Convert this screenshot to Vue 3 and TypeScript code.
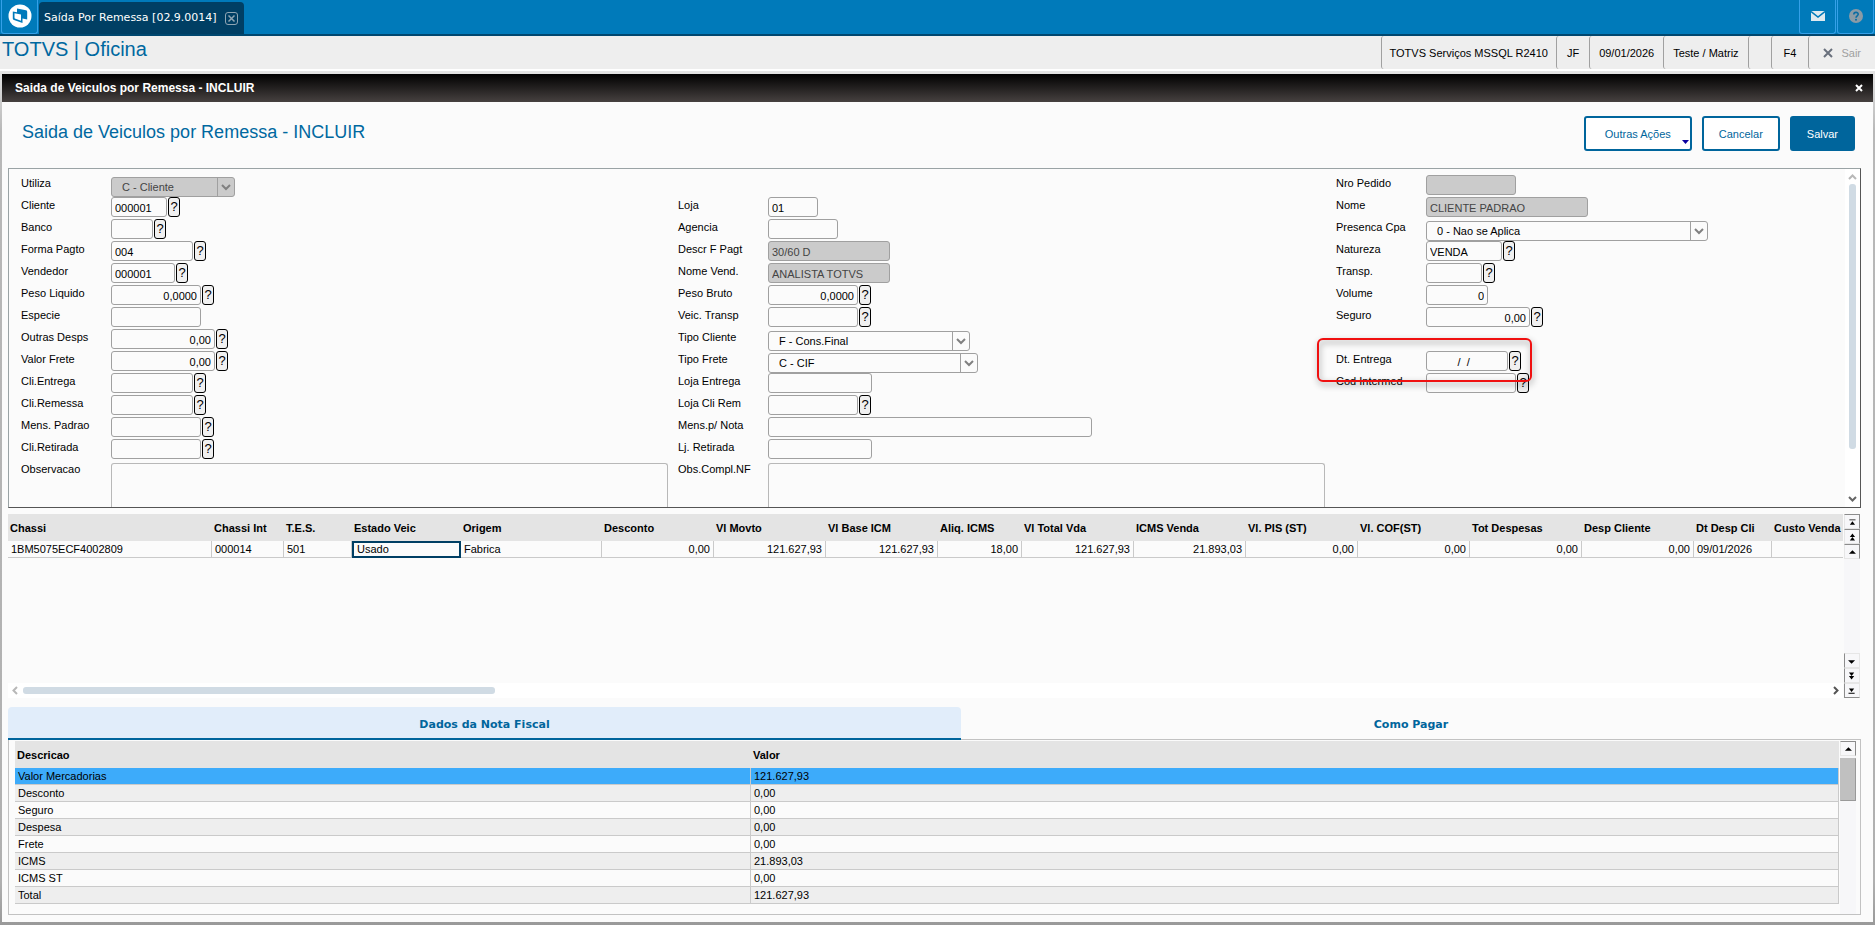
<script setup lang="ts">
import { reactive, ref } from 'vue'

type Kind = 'text' | 'select' | 'area' | 'blank'

interface Field {
  id: string
  label: string
  kind: Kind
  width: number
  value: string
  lookup?: boolean
  numeric?: boolean
  disabled?: boolean
  marked?: boolean
}

interface GridColumn {
  title: string
  width: number
  value: string
  numeric?: boolean
  active?: boolean
}

function text(id: string, label: string, width: number, value = '', extra: Partial<Field> = {}): Field {
  return { id, label, kind: 'text', width, value, ...extra }
}

const lookup = { lookup: true }
const amount = { lookup: true, numeric: true }

const columns = reactive<Field[][]>([
  [
    { id: 'utiliza', label: 'Utiliza', kind: 'select', width: 124, value: 'C - Cliente', disabled: true },
    text('cliente', 'Cliente', 56, '000001', lookup),
    text('banco', 'Banco', 42, '', lookup),
    text('forma-pagto', 'Forma Pagto', 82, '004', lookup),
    text('vendedor', 'Vendedor', 64, '000001', lookup),
    text('peso-liquido', 'Peso Liquido', 90, '0,0000', amount),
    text('especie', 'Especie', 90),
    text('outras-desps', 'Outras Desps', 104, '0,00', amount),
    text('valor-frete', 'Valor Frete', 104, '0,00', amount),
    text('cli-entrega', 'Cli.Entrega', 82, '', lookup),
    text('cli-remessa', 'Cli.Remessa', 82, '', lookup),
    text('mens-padrao', 'Mens. Padrao', 90, '', lookup),
    text('cli-retirada', 'Cli.Retirada', 90, '', lookup),
    { id: 'observacao', label: 'Observacao', kind: 'area', width: 557, value: '' },
  ],
  [
    { id: 'vazio-1', label: '', kind: 'blank', width: 0, value: '' },
    text('loja', 'Loja', 50, '01'),
    text('agencia', 'Agencia', 70),
    text('descr-pagt', 'Descr F Pagt', 122, '30/60 D', { disabled: true }),
    text('nome-vend', 'Nome Vend.', 122, 'ANALISTA TOTVS', { disabled: true }),
    text('peso-bruto', 'Peso Bruto', 90, '0,0000', amount),
    text('veic-transp', 'Veic. Transp', 90, '', lookup),
    { id: 'tipo-cliente', label: 'Tipo Cliente', kind: 'select', width: 202, value: 'F - Cons.Final' },
    { id: 'tipo-frete', label: 'Tipo Frete', kind: 'select', width: 210, value: 'C - CIF' },
    text('loja-entrega', 'Loja Entrega', 104),
    text('loja-cli-rem', 'Loja Cli Rem', 90, '', lookup),
    text('mens-nota', 'Mens.p/ Nota', 324),
    text('lj-retirada', 'Lj. Retirada', 104),
    { id: 'obs-compl', label: 'Obs.Compl.NF', kind: 'area', width: 557, value: '' },
  ],
  [
    text('nro-pedido', 'Nro Pedido', 90, '', { disabled: true }),
    text('nome', 'Nome', 162, 'CLIENTE PADRAO', { disabled: true }),
    { id: 'presenca', label: 'Presenca Cpa', kind: 'select', width: 282, value: '0 - Nao se Aplica' },
    text('natureza', 'Natureza', 76, 'VENDA', lookup),
    text('transp', 'Transp.', 56, '', lookup),
    text('volume', 'Volume', 62, '0', { numeric: true }),
    text('seguro', 'Seguro', 104, '0,00', amount),
    { id: 'vazio-2', label: '', kind: 'blank', width: 0, value: '' },
    text('dt-entrega', 'Dt. Entrega', 82, '         /  /', { lookup: true, marked: true }),
    text('cod-intermed', 'Cod Intermed', 90, '', lookup),
  ],
])

const grid: GridColumn[] = [
  { title: 'Chassi', width: 204, value: '1BM5075ECF4002809' },
  { title: 'Chassi Int', width: 72, value: '000014' },
  { title: 'T.E.S.', width: 68, value: '501' },
  { title: 'Estado Veic', width: 109, value: 'Usado', active: true },
  { title: 'Origem', width: 141, value: 'Fabrica' },
  { title: 'Desconto', width: 112, value: '0,00', numeric: true },
  { title: 'Vl Movto', width: 112, value: '121.627,93', numeric: true },
  { title: 'Vl Base ICM', width: 112, value: '121.627,93', numeric: true },
  { title: 'Aliq. ICMS', width: 84, value: '18,00', numeric: true },
  { title: 'Vl Total Vda', width: 112, value: '121.627,93', numeric: true },
  { title: 'ICMS Venda', width: 112, value: '21.893,03', numeric: true },
  { title: 'Vl. PIS (ST)', width: 112, value: '0,00', numeric: true },
  { title: 'Vl. COF(ST)', width: 112, value: '0,00', numeric: true },
  { title: 'Tot Despesas', width: 112, value: '0,00', numeric: true },
  { title: 'Desp Cliente', width: 112, value: '0,00', numeric: true },
  { title: 'Dt Desp Cli', width: 78, value: '09/01/2026' },
  { title: 'Custo Venda', width: 0, value: '' },
]

const totals: [string, string][] = [
  ['Valor Mercadorias', '121.627,93'],
  ['Desconto', '0,00'],
  ['Seguro', '0,00'],
  ['Despesa', '0,00'],
  ['Frete', '0,00'],
  ['ICMS', '21.893,03'],
  ['ICMS ST', '0,00'],
  ['Total', '121.627,93'],
]

const steppers = {
  top: [
    { name: 'Primeira linha', d: 'M5 4h7v1h-7zM8.500 6l3 4h-6z' },
    { name: 'Página anterior', d: 'M8.500 3l3 4h-6zM8.500 7l3 4h-6z' },
    { name: 'Linha anterior', d: 'M8.500 5l4 4h-8z' },
  ],
  bottom: [
    { name: 'Próxima linha', d: 'M7.500 10l-4-4h8z' },
    { name: 'Próxima página', d: 'M7.500 7l-3-4h6zM7.500 11l-3-4h6z' },
    { name: 'Última linha', d: 'M7.500 8l-3-4h6zM4 9h7v1h-7z' },
  ],
}

const session = ['TOTVS Serviços MSSQL R2410', 'JF', '09/01/2026', 'Teste / Matriz', '', 'F4']
const tabs = ['Dados da Nota Fiscal', 'Como Pagar']
const activeTab = ref(0)
const selected = ref(0)
</script>

<template>
  <div class="page">
    <header class="topbar">
      <button class="home" type="button" aria-label="Início">
        <svg width="24" height="24" viewBox="0 0 24 24">
          <circle cx="12" cy="12" r="11.500" fill="#fff" />
          <path d="M9 4.500 18 6.200a1.500 1.500 0 0 1 1.200 1.500V15.500l-4.700-1V19L6 16a1.500 1.500 0 0 1-1.200-1.500V7.500L9 8.200Z" fill="#007aba" />
          <path d="M6.500 9.200 13 10.500v6.300L7.500 14.800a1.500 1.500 0 0 1-1-1.400Z" fill="#fff" />
        </svg>
      </button>
      <div class="apptab">
        <span>Saída Por Remessa [02.9.0014]</span>
        <button class="tabclose" type="button" aria-label="Fechar aba">
          <svg width="13" height="13" viewBox="0 0 13 13" fill="none" stroke="#8fa5b3">
            <rect x=".5" y=".5" width="12" height="12" rx="2.500" />
            <path d="M3.500 3.500l6 6M9.500 3.500l-6 6" stroke-width="1.500" />
          </svg>
        </button>
      </div>
      <div class="spacer"></div>
      <button class="topicon" type="button" aria-label="Mensagens">
        <svg width="14" height="10" viewBox="0 0 14 10">
          <path d="M0 0h14v10H0z" fill="#e0e9ef" />
          <path d="M0 .5 7 6 14 .5" fill="none" stroke="#007aba" stroke-width="1.500" />
        </svg>
      </button>
      <button class="topicon" type="button" aria-label="Ajuda">
        <svg width="14" height="14" viewBox="0 0 14 14">
          <circle cx="7" cy="7" r="7" fill="#8b9ba6" />
          <path d="M4.800 5.500C4.800 2.600 9.300 2.700 9.200 5.300 9.100 6.800 7 6.800 7 8.700" fill="none" stroke="#0a6ca3" stroke-width="1.600" />
          <circle cx="7" cy="10.800" r="1" fill="#0a6ca3" />
        </svg>
      </button>
    </header>

    <div class="session">
      <h1>TOTVS | Oficina</h1>
      <div v-for="(item, i) in session" :key="i" class="cell">{{ item }}</div>
      <button class="cell leave" type="button">
        <svg width="10" height="10" viewBox="0 0 10 10" stroke="#69707c" stroke-width="2"><path d="M1 1l8 8M9 1l-8 8" /></svg>
        Sair
      </button>
    </div>

    <div class="frame">
      <main class="window">
        <div class="titlebar">
          <span>Saida de Veiculos por Remessa - INCLUIR</span>
          <button type="button" aria-label="Fechar">
            <svg width="8" height="8" viewBox="0 0 8 8" stroke="#fff" stroke-width="2"><path d="M1 1l6 6M7 1l-6 6" /></svg>
          </button>
        </div>

        <div class="toolbar">
          <h2>Saida de Veiculos por Remessa - INCLUIR</h2>
          <button class="action more" type="button">
            Outras Ações
            <svg class="caret" width="7" height="4" viewBox="0 0 7 4"><path d="M0 0h7L3.500 4z" fill="#0a00a0" /></svg>
          </button>
          <button class="action" type="button">Cancelar</button>
          <button class="action primary" type="button">Salvar</button>
        </div>

        <form class="panel" @submit.prevent>
          <div class="columns">
            <div v-for="(column, c) in columns" :key="c" class="column">
              <div v-for="field in column" :key="field.id" class="field" :class="{ marked: field.marked }">
                <template v-if="field.kind !== 'blank'">
                  <label :for="field.id">{{ field.label }}</label>
                  <div v-if="field.kind === 'select'" class="drop" :style="{ width: field.width + 'px' }">
                    <select :id="field.id" v-model="field.value" :disabled="field.disabled">
                      <option>{{ field.value }}</option>
                    </select>
                    <svg width="18" height="18" viewBox="0 0 18 18" fill="none">
                      <path d="M.5 0v18" stroke="#a0a0a0" />
                      <path d="M5 7l4 4 4-4" stroke="#808080" stroke-width="2" />
                    </svg>
                  </div>
                  <textarea v-else-if="field.kind === 'area'" :id="field.id" v-model="field.value" :style="{ width: field.width + 'px' }"></textarea>
                  <input
                    v-else
                    :id="field.id"
                    v-model="field.value"
                    type="text"
                    :class="{ numeric: field.numeric }"
                    :disabled="field.disabled"
                    :style="{ width: field.width + 'px' }"
                  />
                  <button v-if="field.lookup" class="lookup" type="button" :aria-label="'Pesquisar ' + field.label">?</button>
                </template>
              </div>
            </div>
          </div>
          <div class="vscroll">
            <svg width="9" height="6" viewBox="0 0 9 6" fill="none" stroke="#b8b8b8" stroke-width="2"><path d="M1 5l3.500-3.500L8 5" /></svg>
            <div class="thumb"></div>
            <svg width="9" height="6" viewBox="0 0 9 6" fill="none" stroke="#666" stroke-width="2"><path d="M1 1l3.500 3.500L8 1" /></svg>
          </div>
        </form>

        <section class="items">
          <div class="gridarea">
            <table>
              <colgroup>
                <col v-for="col in grid" :key="col.title" :style="{ width: col.width ? col.width + 'px' : 'auto' }" />
              </colgroup>
              <thead>
                <tr><th v-for="col in grid" :key="col.title" scope="col">{{ col.title }}</th></tr>
              </thead>
              <tbody>
                <tr>
                  <td v-for="col in grid" :key="col.title" :class="{ numeric: col.numeric, active: col.active }">{{ col.value }}</td>
                </tr>
              </tbody>
            </table>
            <div class="hscroll">
              <svg width="6" height="9" viewBox="0 0 6 9" fill="none" stroke="#b8b8b8" stroke-width="2"><path d="M5 1L1.500 4.500 5 8" /></svg>
              <div class="track"><div class="thumb"></div></div>
              <svg width="6" height="9" viewBox="0 0 6 9" fill="none" stroke="#555" stroke-width="2"><path d="M1 1l3.500 3.500L1 8" /></svg>
            </div>
          </div>
          <div class="stepper">
            <button v-for="s in steppers.top" :key="s.name" class="up" type="button" :aria-label="s.name">
              <svg width="16" height="14" viewBox="0 0 16 14"><path :d="s.d" /></svg>
            </button>
            <div class="spacer"></div>
            <button v-for="s in steppers.bottom" :key="s.name" class="down" type="button" :aria-label="s.name">
              <svg width="16" height="14" viewBox="0 0 16 14"><path :d="s.d" /></svg>
            </button>
          </div>
        </section>

        <div class="tabs" role="tablist">
          <button
            v-for="(tab, i) in tabs"
            :key="tab"
            type="button"
            role="tab"
            :aria-selected="activeTab === i"
            :class="{ current: activeTab === i }"
            @click="activeTab = i"
          >{{ tab }}</button>
        </div>

        <section class="totals">
          <table>
            <colgroup><col class="desc" /><col /></colgroup>
            <thead>
              <tr><th scope="col">Descricao</th><th scope="col">Valor</th></tr>
            </thead>
            <tbody>
              <tr v-for="([name, value], i) in totals" :key="name" :class="{ selected: selected === i }" @click="selected = i">
                <td>{{ name }}</td>
                <td>{{ value }}</td>
              </tr>
            </tbody>
          </table>
          <div class="stepper">
            <button class="up" type="button" aria-label="Rolar para cima">
              <svg width="16" height="14" viewBox="0 0 16 14"><path d="M8.500 5l4 4h-8z" /></svg>
            </button>
            <div class="block"></div>
          </div>
        </section>
      </main>
    </div>
  </div>
</template>

<style>
body {
  margin: 0;
}
</style>

<style scoped>
.page {
  display: flex;
  flex-direction: column;
  min-height: 100vh;
  color: #000;
  background: #fbfbfb;
  font: 11px/16px "Liberation Sans", Arial, sans-serif;
}
.page *,
.page *::before,
.page *::after {
  box-sizing: border-box;
}
button,
input,
select,
textarea {
  margin: 0;
  padding: 0;
  border: 0;
  background: none;
  color: inherit;
  font: inherit;
}
h1,
h2 {
  margin: 0;
  color: #0068a0;
  font-weight: 400;
}
svg {
  display: block;
  flex: none;
}
.spacer {
  flex: 1;
}

/* Application bar */
.topbar {
  display: flex;
  gap: 1px;
  height: 36px;
  padding: 0 1px 1px;
  border-bottom: 2px solid #00476f;
  background: #007aba;
}
.home,
.topicon {
  display: flex;
  align-items: center;
  justify-content: center;
  width: 37px;
  height: 34px;
  padding-bottom: 2px;
  border: 1px solid #35a0e8;
  border-top: 0;
  border-radius: 0 0 3px 3px;
}
.apptab {
  display: flex;
  align-items: center;
  gap: 8px;
  height: 32px;
  margin-top: 2px;
  padding: 0 6px 0 5px;
  border-radius: 4px 4px 0 0;
  background: #003f64;
  color: #fff;
  font-family: "DejaVu Sans", Verdana, sans-serif;
}

/* Session line */
.session {
  display: flex;
  height: 35px;
  border-bottom: 2px solid #fff;
  background: #eee;
}
.session h1 {
  flex: 1;
  padding: 0 2px;
  font-size: 20px;
  line-height: 26px;
}
.cell {
  display: flex;
  align-items: center;
  min-width: 23px;
  padding: 0 8px;
  border-left: 1px solid #a0a0a0;
  border-radius: 3px;
}
.cell:nth-child(3) {
  padding: 0 10px;
}
.cell:nth-child(4),
.cell:nth-child(5) {
  padding: 0 9px;
}
.cell:nth-child(7) {
  padding: 0 12px;
}
.cell.leave {
  gap: 8px;
  padding: 0 14px;
  color: #a0a0a0;
}

/* Window */
.frame {
  display: flex;
  flex: 1;
  padding: 3px 2px;
  background: linear-gradient(#e4e4e4, #b8b8b8 60px, #b0b0b0 95%, #999);
}
.window {
  display: flex;
  flex: 1;
  flex-direction: column;
  min-width: 0;
  background: #fbfbfb;
}
.titlebar {
  display: flex;
  align-items: center;
  justify-content: space-between;
  height: 28px;
  padding: 0 10px 0 13px;
  background: linear-gradient(#000, #464140);
  color: #fff;
  font-size: 12px;
  font-weight: 700;
}
.toolbar {
  display: flex;
  align-items: flex-start;
  gap: 10px;
  height: 66px;
  padding: 14px 18px 0 20px;
}
.toolbar h2 {
  flex: 1;
  font-size: 18px;
  line-height: 32px;
}
.action {
  position: relative;
  height: 35px;
  padding: 0 15px;
  border: 2px solid #00659c;
  border-radius: 3px;
  background: #fff;
  color: #00659c;
}
.action.more {
  padding: 0 19px;
}
.action.primary {
  background: #00659c;
  color: #fff;
}
.caret {
  position: absolute;
  right: 1px;
  bottom: 5px;
}

/* Form */
.panel {
  display: flex;
  margin: 0 12px 6px 6px;
  border: 1px solid;
  border-color: #9aa3a5 #555 #555 #9aa3a5;
}
.columns {
  display: grid;
  flex: 1;
  grid-template-columns: 657fr 658fr 509fr;
  padding: 6px 0 0 12px;
}
.field {
  display: flex;
  align-items: flex-start;
  height: 22px;
}
.field:last-child {
  height: auto;
}
.field label {
  flex: none;
  width: 90px;
}
.field input,
.field select {
  height: 20px;
  padding: 1px 3px 0;
  border: 1px solid #a0a0a0;
  border-radius: 3px;
}
.field input:disabled,
.field select:disabled {
  background: #cbcbcb;
  color: #444;
  opacity: 1;
}
.field input.numeric {
  text-align: right;
}
.drop {
  position: relative;
  margin-top: 2px;
}
.drop select {
  display: block;
  width: 100%;
  padding: 0 20px 0 10px;
  appearance: none;
}
.drop svg {
  position: absolute;
  top: 1px;
  right: 0;
  pointer-events: none;
}
.field textarea {
  height: 44px;
  margin-top: 2px;
  padding: 3px;
  border: 1px solid #b8b8b8;
  border-bottom: 0;
  border-radius: 3px 3px 0 0;
  resize: none;
}
.lookup {
  width: 12px;
  height: 20px;
  margin-left: 1px;
  border: 1px solid #000;
  border-radius: 3px;
  background: #f0f0f0;
  font-size: 13px;
  line-height: 18px;
}
.marked {
  position: relative;
}
.marked::after {
  position: absolute;
  z-index: 1;
  top: -13px;
  left: -19px;
  width: 215px;
  height: 44px;
  border: 2px solid #f01010;
  border-radius: 6px;
  content: "";
  filter: drop-shadow(1px 3px 3px rgb(0 0 0 / 45%));
  pointer-events: none;
}
.vscroll {
  display: flex;
  flex-direction: column;
  align-items: center;
  width: 15px;
  padding: 5px 0;
  background: #fff;
}
.vscroll .thumb {
  width: 7px;
  height: 265px;
  margin: 4px 0 auto;
  border-radius: 3px;
  background: #d0dbe4;
}

/* Item grid */
table {
  width: 100%;
  border-collapse: separate;
  border-spacing: 0;
  table-layout: fixed;
}
th {
  height: 27px;
  padding: 0 2px;
  background: #e4e4e4;
  text-align: left;
  white-space: nowrap;
}
td {
  height: 17px;
  padding: 0 3px;
  border-right: 1px solid #cacaca;
  border-bottom: 1px solid #cacaca;
  line-height: 16px;
  white-space: nowrap;
}
td.numeric {
  text-align: right;
}
td.active {
  border: 2px solid #003f64;
  line-height: 13px;
}
.items {
  display: flex;
  flex: 1;
  gap: 1px;
  min-height: 184px;
  margin: 0 13px 9px 6px;
}
.gridarea {
  display: flex;
  flex: 1;
  flex-direction: column;
  justify-content: space-between;
  min-width: 0;
  overflow: hidden;
}
.items td:last-child {
  border-right: 0;
}
.hscroll {
  display: flex;
  align-items: center;
  gap: 5px;
  height: 15px;
  padding: 0 4px;
  background: #fff;
}
.hscroll .track {
  flex: 1;
}
.hscroll .thumb {
  width: 472px;
  max-width: 100%;
  height: 7px;
  border-radius: 3px;
  background: #d0dbe4;
}
.stepper {
  display: flex;
  flex-direction: column;
  width: 16px;
  background: #f7f7f9;
}
.stepper button {
  height: 15px;
  border: 1px solid #e6e6e6;
}
.stepper svg {
  width: 100%;
}
.stepper .up {
  border-top-color: #8c8c8c;
  border-right-color: #8c8c8c;
}
.stepper .down {
  border-left-color: #8c8c8c;
}
.stepper .down:last-child {
  border-bottom-color: #8c8c8c;
}

/* Invoice data */
.tabs {
  display: grid;
  grid-template-columns: 953fr 900fr;
  margin: 0 12px 0 6px;
}
.tabs button {
  height: 33px;
  padding-top: 4px;
  border-bottom: 1px solid #c2c2c2;
  color: #00659c;
  font: 700 11px/16px "DejaVu Sans", Verdana, sans-serif;
}
.tabs .current {
  border-bottom: 2px solid #00659c;
  border-radius: 4px 4px 0 0;
  background: #e1edfa;
}
.totals {
  display: flex;
  gap: 1px;
  margin: 0 12px 7px 6px;
  padding: 1px 4px 0 6px;
  border: 1px solid #c2c2c2;
  border-top: 0;
}
.totals table {
  flex: 1;
  margin-bottom: 10px;
}
.totals .desc {
  width: 736px;
}
.totals tbody tr:nth-child(even) {
  background: #eee;
}
.totals tbody .selected {
  background: #3dabfa;
}
.totals .block {
  height: 43px;
  margin-top: 2px;
  border: 1px solid #c0c0c0;
  border-right-color: #999;
  border-bottom-color: #999;
  background: #c0c0c0;
}
</style>
